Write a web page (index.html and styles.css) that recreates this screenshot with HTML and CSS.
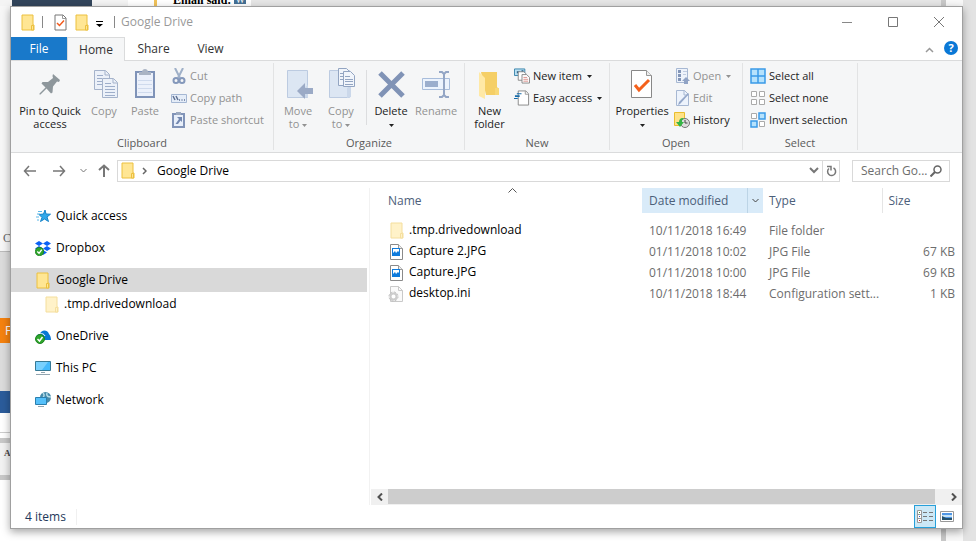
FILE: index.html
```
<!DOCTYPE html>
<html lang="en">
<head>
    <meta charset="UTF-8">
    <meta name="viewport" content="width=device-width, initial-scale=1.0">
    <title>Google Drive</title>
    <link rel="stylesheet" href="styles.css">
</head>
<body>
    <!-- shared icons -->
    <svg class="sprite" aria-hidden="true">
        <symbol id="folder" viewBox="0 0 14 17">
            <path d="M1 1h11v10h1v5H1z" fill="#ffe694" stroke="#ecc03f"/>
            <path d="M10.500 16v-4.500h2v4.500z" fill="#ffe694" stroke="#ecc03f"/>
        </symbol>
        <symbol id="jpg" viewBox="0 0 13 16">
            <path d="M.5.5h8l4 4v11H.5z" fill="#fff" stroke="#8a8a8a"/>
            <path d="M8.500.5v4h4" fill="#eee" stroke="#9a9a9a"/>
            <path d="M2 4h8v8H2z" fill="#0f7bdc"/>
            <path d="M3 5h6v3l-1-1-2 2-1-2-2 2z" fill="#fff"/>
        </symbol>
        <symbol id="caret" viewBox="0 0 5 3">
            <path d="M0 0h5L2.500 3z" fill="currentColor"/>
        </symbol>
        <symbol id="chevron" viewBox="0 0 7 5">
            <path d="M.5 1l3 3 3-3" fill="none" stroke="currentColor"/>
        </symbol>
        <symbol id="synced" viewBox="0 0 10 10">
            <circle cx="5" cy="5" r="4.500" fill="#2fa52b" stroke="#1d8420"/>
            <path d="M2.500 5l2 2 3-4" fill="none" stroke="#fff" stroke-width="1.500"/>
        </symbol>
    </svg>

    <!-- page behind the window -->
    <div class="backdrop">
        <div class="back-top">
            <div class="back-navy"></div>
            <div class="back-mail"><b>Email said:</b><span>W</span></div>
        </div>
        <div class="back-left">
            <div class="back-text">C</div>
            <div class="back-grey"></div>
            <div class="back-orange">F</div>
            <div class="back-grey"></div>
            <div class="back-blue"></div>
            <div class="back-rule"></div>
            <div class="back-tool">A</div>
        </div>
        <div class="back-scroll"></div>
        <div class="back-edge"></div>
    </div>

    <div class="window">
        <header class="titlebar">
            <svg class="title-icon" width="14" height="17"><use href="#folder"/></svg>
            <span class="title-sep"></span>
            <svg class="title-props" width="13" height="17" viewBox="0 0 13 17">
                <path d="M1 1h8l3 3v12H1z" fill="#fff" stroke="#777"/>
                <path d="M8.500 1v3.500H12" fill="none" stroke="#999"/>
                <path d="M3 9l2.500 2.500L10 6.500" fill="none" stroke="#f25a1d" stroke-width="1.500"/>
            </svg>
            <svg class="title-new" width="14" height="17"><use href="#folder"/></svg>
            <svg class="title-more" width="7" height="6" viewBox="0 0 7 6"><path d="M0 0h7v1H0zM0 3h7L3.500 6z"/></svg>
            <span class="title-sep"></span>
            <span class="title">Google Drive</span>
            <div class="controls">
                <button aria-label="Minimize"><svg width="11" height="11"><path d="M0 5.500h10" stroke="#888"/></svg></button>
                <button aria-label="Maximize"><svg width="11" height="11"><path d="M.5.5h9v9h-9z" fill="none" stroke="#777"/></svg></button>
                <button aria-label="Close"><svg width="11" height="11"><path d="M0 0l10 10M10 0L0 10" stroke="#777"/></svg></button>
            </div>
        </header>

        <nav class="tabs">
            <button class="tab file">File</button>
            <button class="tab active">Home</button>
            <button class="tab">Share</button>
            <button class="tab">View</button>
            <button class="collapse" aria-label="Collapse ribbon"><svg width="9" height="6" viewBox="0 0 9 6"><path d="M1 5l3.500-3.500L8 5" fill="none" stroke="#999" stroke-width="1.500"/></svg></button>
            <button class="help" aria-label="Help">?</button>
        </nav>

        <div class="ribbon">
            <section class="group clipboard">
                <div class="tools">
                    <button class="big pin">
                        <svg width="32" height="32" viewBox="0 0 32 32"><path d="M19 6l7 6-1 2-2-.5-4 5-.5 6-1.500 1-4.500-5-6 6H5.500v-1l6-6-4-4 1-1.500 5.500 0 5-4-.5-2z" fill="#8e979c"/></svg>
                        Pin to Quick<br>access
                    </button>
                    <button class="big copy" disabled>
                        <svg width="32" height="32" viewBox="0 0 32 32">
                            <g fill="#ecf1f9" stroke="#a5b3cb"><path d="M5.500 2.500h11l4 4v15h-15z"/><path d="M13.500 10.500h11l4 4v15h-15z"/></g>
                            <path d="M16 3v4h4M24 11v4h4" fill="none" stroke="#a5b3cb"/>
                            <path d="M8 7.500h6M8 10.500h5M8 13.500h5M8 16.500h5M16 15.500h6M16 18.500h10M16 21.500h10M16 24.500h10M16 27.500h10" stroke="#9eaeca"/>
                        </svg>
                        Copy
                    </button>
                    <button class="big paste" disabled>
                        <svg width="32" height="32" viewBox="0 0 32 32">
                            <rect x="7" y="4" width="18" height="25" fill="#ecf1fb" stroke="#7f93b8" stroke-width="2"/>
                            <path d="M10 4h3c0-4 6-4 6 0h3v3H10z" fill="#aab4c4"/>
                            <path d="M9 12.500h14M9 16.500h14M9 20.500h14M9 24.500h14" stroke="#cfdaed"/>
                        </svg>
                        Paste
                    </button>
                    <div class="smalls">
                        <button class="small" disabled>
                            <svg width="16" height="16" viewBox="0 0 16 16"><path d="M4 0l5 10M12 0L7 10" stroke="#9fb0c8" stroke-width="2"/><g fill="none" stroke="#8498bb" stroke-width="2"><circle cx="5" cy="12.500" r="2.500"/><circle cx="11" cy="12.500" r="2.500"/></g></svg>
                            Cut
                        </button>
                        <button class="small" disabled>
                            <svg width="16" height="16" viewBox="0 0 16 16"><path d="M.5 4.500h15v8H.5z" fill="#e5edf8" stroke="#a5b7d3"/><path d="M2 6l2 4M5 6l2 4M8 10h1M10.500 10h1M13 10h1" stroke="#5f7194" stroke-width="1.500"/></svg>
                            Copy path
                        </button>
                        <button class="small" disabled>
                            <svg width="16" height="16" viewBox="0 0 16 16"><path d="M2 2h11v13H2z" fill="#e8effa" stroke="#8194b8" stroke-width="2"/><path d="M5 0h5v3H5z" fill="#9ba9c0"/><path d="M6 5h5v5L9.500 8.500 7 12H4.500L8 7z" fill="#7388b0"/></svg>
                            Paste shortcut
                        </button>
                    </div>
                </div>
                <h2>Clipboard</h2>
            </section>

            <section class="group organize">
                <div class="tools">
                    <button class="big move" disabled>
                        <svg width="32" height="32" viewBox="0 0 32 32"><path d="M5.500 2.500h20v27h-20z" fill="#dce6f3" stroke="#bccbe1"/><path d="M22 20l4-3v12l-4 1z" fill="#cbd8ea"/><path d="M15 23l8-8v5h8v6h-8v5z" fill="#9baac6"/></svg>
                        Move<br>to <svg class="caret" width="5" height="3"><use href="#caret"/></svg>
                    </button>
                    <button class="big copyto" disabled>
                        <svg width="32" height="32" viewBox="0 0 32 32"><path d="M4.500 2.500h20v27h-20z" fill="#dce6f3" stroke="#bccbe1"/><path d="M22 20l4-3v12l-4 1z" fill="#cbd8ea"/><g fill="#f1f5fb" stroke="#93a5c2"><path d="M13.500.5h8l3 3v14h-11z"/><path d="M18.500 3.500h7l4 4v11h-11z"/></g><path d="M15 5.500h3M15 8.500h3M15 11.500h3M20 8.500h5M20 11.500h8M20 13.500h8M20 16.500h8" stroke="#93a5c2"/></svg>
                        Copy<br>to <svg class="caret" width="5" height="3"><use href="#caret"/></svg>
                    </button>
                    <span class="tool-sep"></span>
                    <button class="big delete">
                        <svg width="32" height="32" viewBox="0 0 32 32"><path d="M5 5l23 23M28 5L5 28" stroke="#8093b6" stroke-width="5"/></svg>
                        Delete<br><svg class="caret" width="5" height="3"><use href="#caret"/></svg>
                    </button>
                    <button class="big rename" disabled>
                        <svg width="32" height="32" viewBox="0 0 32 32"><path d="M3.500 10.500h27v11h-27z" fill="#ecf3fd" stroke="#a8bddb"/><path d="M6 13h13v6H6z" fill="#9baecd"/><path d="M20 4h3l2 2 2-2h3M20 29h3l2-2 2 2h3M25 5v23" fill="none" stroke="#94a6c5" stroke-width="2"/></svg>
                        Rename
                    </button>
                </div>
                <h2>Organize</h2>
            </section>

            <section class="group new">
                <div class="tools">
                    <button class="big newfolder">
                        <svg width="32" height="32" viewBox="0 0 32 32"><path d="M7 4h16v15l2 2v6H12z" fill="#f5cf66"/><path d="M5 4l6 6v21l-6-3z" fill="#ffe9a6"/><path d="M21 20l4 0v7h-4z" fill="#f8d877"/></svg>
                        New<br>folder
                    </button>
                    <div class="smalls">
                        <button class="small">
                            <svg width="16" height="16" viewBox="0 0 17 16"><path d="M.5.5h11v7H.5z" fill="#b9e0f2" stroke="#3983ac"/><path d="M3 3h3v2H3zM8 2h2v2H8z" fill="#225c88"/><path d="M4.500 3.500h6l2 2v7h-8z" fill="#fff" stroke="#888"/><path d="M8.500 6.500h5l3 3v6h-8z" fill="#fff" stroke="#888"/><path d="M10 9.500h4M10 11.500h5M10 13.500h5" stroke="#db8f8a"/></svg>
                            New item <svg class="caret" width="5" height="3"><use href="#caret"/></svg>
                        </button>
                        <button class="small">
                            <svg width="16" height="16" viewBox="0 0 17 16"><path d="M4.500.5h8l3 3v12h-11z" fill="#fff" stroke="#888"/><path d="M12 .5V4h3.500" fill="none" stroke="#999"/><path d="M3 3h5v1H3zM1 5h5v2H1zM0 8h4v1H0z" fill="#176caa"/></svg>
                            Easy access <svg class="caret" width="5" height="3"><use href="#caret"/></svg>
                        </button>
                    </div>
                </div>
                <h2>New</h2>
            </section>

            <section class="group open">
                <div class="tools">
                    <button class="big props">
                        <svg width="32" height="32" viewBox="0 0 32 32"><path d="M5.500 2.500h15l5 5v22h-20z" fill="#fff" stroke="#888"/><path d="M20.500 2.500v5h5" fill="#eee" stroke="#999"/><path d="M9 17l4 5 10-10" fill="none" stroke="#f4611c" stroke-width="3"/></svg>
                        Properties<br><svg class="caret" width="5" height="3"><use href="#caret"/></svg>
                    </button>
                    <div class="smalls">
                        <button class="small" disabled>
                            <svg width="16" height="16" viewBox="0 0 16 16"><path d="M2.500.5h11v14h-11z" fill="#eef3fb" stroke="#a7b8d3"/><path d="M4 2h3v3H4zM4 6h3v3H4zM4 10h3v3H4z" fill="#8396b8"/><path d="M9 3.500h4M9 6.500h3" stroke="#c0cce0"/><path d="M8 13l4-4 4 4h-2v3h-4v-3z" fill="#90a3c5"/></svg>
                            Open <svg class="caret" width="5" height="3"><use href="#caret"/></svg>
                        </button>
                        <button class="small" disabled>
                            <svg width="16" height="16" viewBox="0 0 16 16"><path d="M2.500.5h8l4 4v11h-12z" fill="#edf3fc" stroke="#a7b8d3"/><path d="M10 0v5h5" fill="none" stroke="#a7b8d3"/><path d="M15 4l-9 10-2 1 1-3 9-9z" fill="#94a7c9"/></svg>
                            Edit
                        </button>
                        <button class="small">
                            <svg width="16" height="16" viewBox="0 0 16 16"><path d="M.5.5h10v13H.5z" fill="#ffe287" stroke="#e9bd2d"/><circle cx="11" cy="11" r="4.500" fill="#ddd" stroke="#777"/><path d="M11 8v3h2.500" fill="none" stroke="#444"/><path d="M9 6C6 6 5 8 5 10H2l4 5 4-5H8c0-2 0-3 2-3z" fill="#35b545"/></svg>
                            History
                        </button>
                    </div>
                </div>
                <h2>Open</h2>
            </section>

            <section class="group select">
                <div class="tools">
                    <div class="smalls">
                        <button class="small">
                            <svg width="16" height="16" viewBox="0 0 16 16" fill="#b6e2fc" stroke="#3a9ae8" stroke-width="1.500"><path d="M1 1h7v7H1zM8 1h7v7H8zM1 8h7v7H1zM8 8h7v7H8z"/></svg>
                            Select all
                        </button>
                        <button class="small">
                            <svg width="16" height="16" viewBox="0 0 16 16" fill="#fff" stroke="#aaa"><path d="M1.500 1.500h5v5h-5zM9.500 1.500h5v5h-5zM1.500 9.500h5v5h-5zM9.500 9.500h5v5h-5z"/></svg>
                            Select none
                        </button>
                        <button class="small">
                            <svg width="16" height="16" viewBox="0 0 16 16"><path d="M1.500 1.500h5v5h-5zM9.500 9.500h5v5h-5z" fill="#fff" stroke="#aaa"/><path d="M9 1h6v6H9zM1 9h6v6H1z" fill="#b6e2fc" stroke="#3a9ae8" stroke-width="1.500"/></svg>
                            Invert selection
                        </button>
                    </div>
                </div>
                <h2>Select</h2>
            </section>
        </div>

        <div class="navbar">
            <button class="nav-btn" aria-label="Back"><svg width="13" height="12" viewBox="0 0 13 12"><path d="M6 1L1.500 6 6 11M2 6h11" fill="none" stroke="#777" stroke-width="1.500"/></svg></button>
            <button class="nav-btn" aria-label="Forward"><svg width="13" height="12" viewBox="0 0 13 12"><path d="M7 1l4.500 5L7 11M11 6H0" fill="none" stroke="#777" stroke-width="1.500"/></svg></button>
            <button class="nav-btn recent" aria-label="Recent locations"><svg width="7" height="5"><use href="#chevron"/></svg></button>
            <button class="nav-btn up" aria-label="Up"><svg width="12" height="13" viewBox="0 0 12 13"><path d="M1 6l5-4.500L11 6M6 2v11" fill="none" stroke="#777" stroke-width="2"/></svg></button>
            <div class="address">
                <svg width="14" height="17"><use href="#folder"/></svg>
                <svg class="crumb" width="5" height="8" viewBox="0 0 5 8"><path d="M1 1l3 3-3 3" fill="none" stroke="#666" stroke-width="1.500"/></svg>
                <span>Google Drive</span>
                <button class="history" aria-label="Previous locations"><svg width="10" height="7" viewBox="0 0 10 7"><path d="M1 1l4 4 4-4" fill="none" stroke="#777" stroke-width="2"/></svg></button>
                <button class="refresh" aria-label="Refresh"><svg width="11" height="12" viewBox="0 0 11 12"><path d="M7.500 3A4 4 0 1 1 3 3.500M1 1.500h4v4" fill="none" stroke="#777" stroke-width="1.500"/></svg></button>
            </div>
            <label class="search">
                <input type="text" placeholder="Search Go..." aria-label="Search Google Drive">
                <svg width="12" height="12" viewBox="0 0 12 12"><circle cx="7.500" cy="4.500" r="3.500" fill="none" stroke="#666" stroke-width="1.500"/><path d="M5 7l-4.500 4.500" stroke="#666" stroke-width="2"/></svg>
            </label>
        </div>

        <div class="content">
            <aside class="sidebar">
                <a class="place" href="#">
                    <svg width="16" height="16" viewBox="0 0 16 16"><path d="M10 2l1 4 4.500.2-3.500 2.800 1.500 4.500L9.500 11 5.500 13.500 7 9.500 4 6.500l4.500-.5z" fill="#31a8ea" stroke="#1683c8"/><path d="M3 3.500h4M2 6h3M1 9h3M2 12h2" stroke="#5db8e8"/></svg>
                    Quick access
                </a>
                <a class="place" href="#">
                    <svg width="16" height="16" viewBox="0 0 16 16"><path d="M4 1l4 2.500L4 6 0 3.500zM12 1l4 2.500L12 6 8 3.500zM4 6l4 2.500L4 11 0 8.500zM12 6l4 2.500-4 2.500-4-2.500zM8 10l4 2.500L8 15l-4-2.500z" fill="#0b61f5"/><use href="#synced" x="0" y="7" width="9" height="9"/></svg>
                    Dropbox
                </a>
                <a class="place selected" href="#">
                    <svg width="16" height="17"><use href="#folder" width="14" height="17" x="1"/></svg>
                    Google Drive
                </a>
                <a class="place child" href="#">
                    <svg class="faded" width="14" height="17"><use href="#folder"/></svg>
                    .tmp.drivedownload
                </a>
                <a class="place" href="#">
                    <svg width="16" height="16" viewBox="0 0 16 16"><path d="M1 10C1 7 3 6 5 6c1-4 7-5 9 0 1 1 2 3 2 6H3z" fill="#0878d4"/><path d="M5 6c2-1 4 0 5 2" fill="none" stroke="#fff"/><use href="#synced" x="0" y="6" width="10" height="10"/></svg>
                    OneDrive
                </a>
                <a class="place" href="#">
                    <svg width="16" height="16" viewBox="0 0 16 16"><path d="M.5 1.500h15v9H.5z" fill="#45b9fb" stroke="#367995"/><path d="M1 2h12L7 10H1z" fill="#79d0fd"/><path d="M6 12.500h4M1 14.500h14" stroke="#92a5b0"/></svg>
                    This PC
                </a>
                <a class="place" href="#">
                    <svg width="16" height="16" viewBox="0 0 16 16"><circle cx="10.500" cy="5.500" r="5.500" fill="#478aa9"/><path d="M8 1c2 2 1 4-1 5M12 1c-1 3 1 4 4 4" fill="none" stroke="#b8deea" stroke-width="1.500"/><path d="M.5 5.500h11v7H.5z" fill="#55c0fa" stroke="#2a7fae"/><path d="M3 14.500h6" stroke="#92a5b0"/></svg>
                    Network
                </a>
            </aside>

            <main class="files">
                <table>
                    <colgroup><col><col class="col-date"><col class="col-type"><col class="col-size"></colgroup>
                    <thead>
                        <tr>
                            <th class="name">Name<svg class="sort" width="9" height="5" viewBox="0 0 9 5"><path d="M.5 4.500l4-4 4 4" fill="none" stroke="#555"/></svg></th>
                            <th class="date"><div><span>Date modified</span><button aria-label="Filter by date"><svg width="7" height="5"><use href="#chevron"/></svg></button></div></th>
                            <th>Type</th>
                            <th>Size</th>
                        </tr>
                    </thead>
                    <tbody>
                        <tr>
                            <td class="name"><svg class="faded" width="17" height="17"><use href="#folder" x="2" width="14" height="17"/></svg>.tmp.drivedownload</td>
                            <td>10/11/2018 16:49</td><td>File folder</td><td></td>
                        </tr>
                        <tr>
                            <td class="name"><svg width="17" height="16"><use href="#jpg" x="2" width="13" height="16"/></svg>Capture 2.JPG</td>
                            <td>01/11/2018 10:02</td><td>JPG File</td><td>67 KB</td>
                        </tr>
                        <tr>
                            <td class="name"><svg width="17" height="16"><use href="#jpg" x="2" width="13" height="16"/></svg>Capture.JPG</td>
                            <td>01/11/2018 10:00</td><td>JPG File</td><td>69 KB</td>
                        </tr>
                        <tr>
                            <td class="name"><svg width="17" height="16" viewBox="0 0 17 16"><path d="M2.500.5h8l4 4v11h-12z" fill="#fafafa" stroke="#c9c9c9"/><path d="M10.500.5v4h4" fill="none" stroke="#c9c9c9"/><circle cx="5.500" cy="10.500" r="3" fill="#fff" stroke="#ccc" stroke-width="2"/><circle cx="5.500" cy="10.500" r="4.500" fill="none" stroke="#bbb" stroke-dasharray="2 1.500"/></svg>desktop.ini</td>
                            <td>10/11/2018 18:44</td><td>Configuration sett...</td><td>1 KB</td>
                        </tr>
                    </tbody>
                </table>
                <div class="scrollbar">
                    <button aria-label="Scroll left"><svg width="6" height="8" viewBox="0 0 6 8"><path d="M5 .5L1.500 4 5 7.500" fill="none" stroke="#505050" stroke-width="2"/></svg></button>
                    <div class="thumb"></div>
                    <button class="right" aria-label="Scroll right"><svg width="6" height="8" viewBox="0 0 6 8"><path d="M1 .5L4.500 4 1 7.500" fill="none" stroke="#505050" stroke-width="2"/></svg></button>
                </div>
            </main>
        </div>

        <footer class="statusbar">
            <span class="count">4 items</span>
            <button class="view active" aria-label="Details view"><svg width="16" height="13" viewBox="0 0 16 13"><path d="M.5.5h4v12h-4zM.5 4.500h4M.5 8.500h4" fill="#fff" stroke="#999"/><path d="M2 2h1v1H2z" fill="#3a9a3a"/><path d="M2 6h1v1H2z" fill="#2b5fd0"/><path d="M2 10h1v1H2z" fill="#d02b2b"/><path d="M6 2.500h4M12 2.500h4M6 6.500h4M12 6.500h4M6 10.500h4M12 10.500h4" stroke="#777"/></svg></button>
            <button class="view" aria-label="Large icons view"><svg width="14" height="11" viewBox="0 0 14 11"><path d="M.5.5h13v10H.5z" fill="#fff" stroke="#999"/><path d="M2 2h10v7H2z" fill="#4f96e6"/><path d="M2 4h10v2H2z" fill="#c4e2f6"/><path d="M2 5l4 2h6v2H2z" fill="#23506a"/></svg></button>
        </footer>
    </div>
</body>
</html>
```
FILE: styles.css
```
* {
    box-sizing: border-box;
}
body {
    margin: 0;
    min-height: 100vh;
    display: flex;
    padding: 6px 13px 12px 10px;
    position: relative;
    overflow: hidden;
    background-color: #fff;
    font-family: "Open Sans", "Noto Sans", sans-serif;
    font-size: 12px;
    line-height: 16px;
    color: #000;
}
button {
    font: inherit;
    color: inherit;
    background: none;
    border: none;
    padding: 0;
    margin: 0;
    white-space: nowrap;
}
svg {
    flex: none;
}
.sprite {
    position: absolute;
    width: 0;
    height: 0;
}

/* page behind the window */
.backdrop {
    position: absolute;
    inset: 0;
    overflow: hidden;
}
.back-top {
    height: 6px;
    display: flex;
    padding-left: 12px;
    background: linear-gradient(to right, #f4f4f4 128px, #fff 128px, #fff 251px, #e6e6e6 251px);
}
.back-navy {
    width: 80px;
    background-color: #33465c;
}
.back-mail {
    display: flex;
    gap: 3px;
    margin-left: 62px;
    height: 6px;
    overflow: hidden;
    padding-left: 16px;
    border-left: 3px solid #f0c25a;
    font-family: "Liberation Serif", serif;
    line-height: 0;
}
.back-mail span {
    width: 12px;
    height: 4px;
    background-color: #447094;
    color: #fff;
    font-size: 10px;
    text-align: center;
}
.back-left {
    width: 11px;
    display: flex;
    flex-direction: column;
}
.back-text {
    height: 246px;
    padding: 224px 0 0 3px;
    border-bottom: 1px solid #bbb;
    background-color: #f7f7f7;
    color: #666;
    font-family: "Liberation Serif", serif;
}
.back-grey {
    height: 66px;
    background-color: #dcdcdc;
}
.back-orange {
    height: 25px;
    background-color: #f5820f;
    color: #fff;
    line-height: 25px;
    padding-left: 5px;
}
.back-orange + .back-grey {
    height: 48px;
}
.back-blue {
    height: 22px;
    background-color: #2b5c9b;
}
.back-rule {
    height: 20px;
    border-bottom: 1px solid #ccc;
}
.back-tool {
    height: 42px;
    margin-top: 5px;
    border: solid #c8c8c8;
    border-width: 5px 0;
    background-color: #f2f2f2;
    color: #444;
    font-family: "Liberation Serif", serif;
    font-size: 9px;
    font-weight: bold;
    padding: 2px 0 0 4px;
}
.back-scroll {
    position: absolute;
    top: 0;
    bottom: 0;
    right: 13px;
    width: 22px;
    background-color: #f8f8f8;
    border-left: 5px solid #c8c8c8;
}
.back-edge {
    position: absolute;
    top: 0;
    bottom: 0;
    right: 0;
    width: 13px;
    background-color: #e3e3e3;
}

/* window */
.window {
    position: relative;
    flex: 1;
    min-width: 0;
    display: flex;
    flex-direction: column;
    background-color: #fff;
    border: 1px solid #a0a0a0;
    box-shadow: 0 3px 8px rgba(0, 0, 0, 0.35);
}
.titlebar {
    height: 30px;
    display: flex;
    align-items: center;
    padding-left: 10px;
}
.title-sep {
    width: 1px;
    height: 12px;
    margin-left: 7px;
    background-color: #888;
}
.title-props {
    margin-left: 11px;
}
.title-new {
    margin-left: 8px;
}
.title-more {
    margin: 3px 4px 0 7px;
}
.title {
    margin-left: 6px;
    color: #999;
}
.controls {
    display: flex;
    margin-left: auto;
}
.controls button {
    width: 46px;
    height: 28px;
    display: flex;
    align-items: center;
    justify-content: center;
}
.tabs {
    display: flex;
    align-items: flex-end;
    height: 24px;
    border-bottom: 1px solid #dadbdc;
}
.tab {
    height: 23px;
    width: 57px;
    color: #333;
}
.tab.file {
    width: 56px;
    background-color: #1979ca;
    color: #fff;
}
.tab.active {
    width: 58px;
    height: 24px;
    margin-bottom: -1px;
    border: 1px solid #dadbdc;
    border-bottom: none;
    background-color: #f5f6f7;
}
.collapse {
    height: 23px;
    width: 24px;
    margin-left: auto;
}
.help {
    width: 14px;
    height: 14px;
    margin: 0 4px 5px 3px;
    border-radius: 50%;
    background-color: #0a78d6;
    color: #fff;
    font-size: 11px;
    font-weight: bold;
    line-height: 14px;
}

/* ribbon */
.ribbon {
    display: flex;
    height: 92px;
    background-color: #f5f6f7;
    border-bottom: 1px solid #dadbdc;
    font-size: 11px;
}
.group {
    display: flex;
    flex-direction: column;
    flex: none;
    margin: 2px 0;
    border-right: 1px solid #e2e3e4;
}
.group h2 {
    margin: 0;
    font-size: 11px;
    font-weight: normal;
    line-height: 14px;
    text-align: center;
    color: #5a5a5a;
}
.clipboard {
    width: 263px;
}
.organize {
    width: 191px;
}
.new {
    width: 145px;
}
.open {
    width: 133px;
}
.select {
    width: 115px;
}
.tools {
    display: flex;
    align-items: flex-start;
    flex: 1;
}
.big {
    flex: none;
    display: block;
    padding-top: 5px;
    line-height: 13px;
    text-align: center;
    color: #222;
}
.big > svg:first-child {
    display: block;
    margin: 0 auto 4px;
}
.big:disabled,
.small:disabled {
    color: #929292;
}
.caret {
    vertical-align: middle;
    margin-left: 2px;
}
.big br + .caret {
    margin-left: 0;
}
.pin {
    width: 78px;
}
.copy {
    width: 30px;
}
.paste {
    width: 52px;
}
.move {
    width: 48px;
}
.copyto {
    width: 38px;
}
.delete {
    width: 48px;
}
.rename {
    width: 40px;
}
.newfolder {
    width: 49px;
}
.props {
    width: 64px;
}
.tool-sep {
    width: 1px;
    height: 55px;
    margin: 7px 0 0 6px;
    background-color: #dcdddf;
}
.smalls {
    display: flex;
    flex-direction: column;
    padding-top: 2px;
    flex: none;
}
.small {
    display: flex;
    align-items: center;
    gap: 3px;
    height: 22px;
    color: #222;
}
.select .smalls {
    padding-left: 7px;
}

/* address row */
.navbar {
    display: flex;
    align-items: center;
    height: 35px;
    padding: 0 12px;
}
.nav-btn {
    width: 13px;
    height: 22px;
    display: flex;
    align-items: center;
    justify-content: center;
    margin-right: 17px;
    color: #777;
}
.nav-btn.recent {
    width: 8px;
    margin: 0 10px 0 -4px;
}
.nav-btn.up {
    margin-right: 7px;
}
.address {
    flex: 1;
    display: flex;
    align-items: center;
    height: 22px;
    border: 1px solid #d9d9d9;
    padding-left: 3px;
}
.crumb {
    margin: 0 10px 0 7px;
}
.address button {
    display: flex;
    align-items: center;
    justify-content: center;
    width: 16px;
    height: 20px;
}
.address .history {
    margin-left: auto;
}
.address .refresh {
    width: 17px;
    border-left: 1px solid #d9d9d9;
}
.search {
    display: flex;
    align-items: center;
    width: 98px;
    height: 22px;
    margin-left: 12px;
    padding: 0 7px 0 8px;
    border: 1px solid #d9d9d9;
}
.search input {
    flex: 1;
    min-width: 0;
    padding: 0;
    border: none;
    outline: none;
    font: inherit;
}
.search input::placeholder {
    color: #6d6d6d;
}

/* places and files */
.content {
    flex: 1;
    display: flex;
    min-height: 0;
}
.sidebar {
    width: 359px;
    flex: none;
    padding: 16px 2px 0 0;
    border-right: 1px solid #f2f2f2;
}
.place {
    display: flex;
    align-items: center;
    gap: 5px;
    height: 24px;
    margin-bottom: 8px;
    padding-left: 24px;
    color: #000;
    text-decoration: none;
}
.place.selected {
    margin-bottom: 0;
    background-color: #d9d9d9;
}
.place.child {
    padding-left: 34px;
}
.faded {
    opacity: 0.5;
}
.files {
    flex: 1;
    min-width: 0;
    display: flex;
    flex-direction: column;
    justify-content: space-between;
    padding-left: 1px;
}
table {
    width: 100%;
    table-layout: fixed;
    border-collapse: collapse;
}
.col-date {
    width: 121px;
}
.col-type {
    width: 119px;
}
.col-size {
    width: 80px;
}
th {
    height: 25px;
    padding: 0 0 0 6px;
    font-weight: normal;
    text-align: left;
    color: #4c607a;
    border-right: 1px solid #e5e5e5;
}
th:last-child,
th.name {
    border-right: none;
}
th.name {
    position: relative;
    padding-left: 17px;
}
.sort {
    position: absolute;
    top: 0;
    left: 137px;
}
th.date {
    background-color: #d9ebf9;
    border-right: none;
    padding-left: 7px;
}
.date div {
    display: flex;
    justify-content: space-between;
    align-items: center;
}
.date button {
    display: flex;
    align-items: center;
    justify-content: center;
    width: 16px;
    height: 25px;
    border-left: 1px solid #bcd4e6;
    color: #444;
}
tbody::before {
    content: "";
    display: block;
    height: 7px;
}
td {
    height: 21px;
    padding: 0 0 0 7px;
    color: #6d6d6d;
    white-space: nowrap;
}
td:nth-child(3) {
    padding-left: 6px;
}
td:last-child {
    padding-right: 7px;
    text-align: right;
}
td.name {
    padding-left: 17px;
    color: #000;
}
td.name svg {
    margin-right: 4px;
    vertical-align: middle;
}
.scrollbar {
    display: flex;
    height: 16px;
    background-color: #f0f0f0;
}
.scrollbar button {
    width: 17px;
}
.scrollbar .right {
    width: 27px;
    padding-left: 10px;
}
.thumb {
    flex: 1;
    height: 15px;
    background-color: #cdcdcd;
}

.statusbar {
    display: flex;
    align-items: center;
    height: 23px;
    padding: 0 4px 0 14px;
    color: #1e395b;
}
.count {
    padding-right: 10px;
    margin-right: auto;
    border-right: 1px solid #f0f0f0;
}
.view {
    display: flex;
    align-items: center;
    justify-content: center;
    width: 22px;
    height: 23px;
}
.view.active {
    background-color: #cce8f6;
    border: 1px solid #26a0da;
}
```
